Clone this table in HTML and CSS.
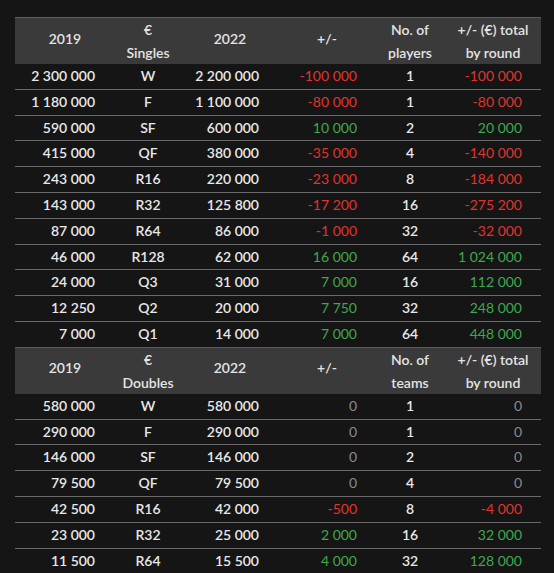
FILE: index.html
```html
<!DOCTYPE html>
<html>
<head>
<meta charset="utf-8">
<link rel="stylesheet" href="styles.css">
</head>
<body>
<table class="prize">
  <colgroup>
    <col class="c1"><col class="c2"><col class="c3"><col class="c4"><col class="c5"><col class="c6">
  </colgroup>
  <tbody>
    <tr class="head">
      <th class="one">2019</th><th>€<br>Singles</th><th class="one">2022</th><th class="one">+/-</th><th>No. of<br>players</th><th>+/- (€) total<br>by round</th>
    </tr>
    <tr><td class="n">2 300 000</td><td class="r">W</td><td class="n">2 200 000</td><td class="d neg">-100 000</td><td class="p">1</td><td class="t neg">-100 000</td></tr>
    <tr><td class="n">1 180 000</td><td class="r">F</td><td class="n">1 100 000</td><td class="d neg">-80 000</td><td class="p">1</td><td class="t neg">-80 000</td></tr>
    <tr><td class="n">590 000</td><td class="r">SF</td><td class="n">600 000</td><td class="d pos">10 000</td><td class="p">2</td><td class="t pos">20 000</td></tr>
    <tr><td class="n">415 000</td><td class="r">QF</td><td class="n">380 000</td><td class="d neg">-35 000</td><td class="p">4</td><td class="t neg">-140 000</td></tr>
    <tr><td class="n">243 000</td><td class="r">R16</td><td class="n">220 000</td><td class="d neg">-23 000</td><td class="p">8</td><td class="t neg">-184 000</td></tr>
    <tr><td class="n">143 000</td><td class="r">R32</td><td class="n">125 800</td><td class="d neg">-17 200</td><td class="p">16</td><td class="t neg">-275 200</td></tr>
    <tr><td class="n">87 000</td><td class="r">R64</td><td class="n">86 000</td><td class="d neg">-1 000</td><td class="p">32</td><td class="t neg">-32 000</td></tr>
    <tr><td class="n">46 000</td><td class="r">R128</td><td class="n">62 000</td><td class="d pos">16 000</td><td class="p">64</td><td class="t pos">1 024 000</td></tr>
    <tr><td class="n">24 000</td><td class="r">Q3</td><td class="n">31 000</td><td class="d pos">7 000</td><td class="p">16</td><td class="t pos">112 000</td></tr>
    <tr><td class="n">12 250</td><td class="r">Q2</td><td class="n">20 000</td><td class="d pos">7 750</td><td class="p">32</td><td class="t pos">248 000</td></tr>
    <tr><td class="n">7 000</td><td class="r">Q1</td><td class="n">14 000</td><td class="d pos">7 000</td><td class="p">64</td><td class="t pos">448 000</td></tr>
    <tr class="head">
      <th class="one">2019</th><th>€<br>Doubles</th><th class="one">2022</th><th class="one">+/-</th><th>No. of<br>teams</th><th>+/- (€) total<br>by round</th>
    </tr>
    <tr><td class="n">580 000</td><td class="r">W</td><td class="n">580 000</td><td class="d zero">0</td><td class="p">1</td><td class="t zero">0</td></tr>
    <tr><td class="n">290 000</td><td class="r">F</td><td class="n">290 000</td><td class="d zero">0</td><td class="p">1</td><td class="t zero">0</td></tr>
    <tr><td class="n">146 000</td><td class="r">SF</td><td class="n">146 000</td><td class="d zero">0</td><td class="p">2</td><td class="t zero">0</td></tr>
    <tr><td class="n">79 500</td><td class="r">QF</td><td class="n">79 500</td><td class="d zero">0</td><td class="p">4</td><td class="t zero">0</td></tr>
    <tr><td class="n">42 500</td><td class="r">R16</td><td class="n">42 000</td><td class="d neg">-500</td><td class="p">8</td><td class="t neg">-4 000</td></tr>
    <tr><td class="n">23 000</td><td class="r">R32</td><td class="n">25 000</td><td class="d pos">2 000</td><td class="p">16</td><td class="t pos">32 000</td></tr>
    <tr><td class="n">11 500</td><td class="r">R64</td><td class="n">15 500</td><td class="d pos">4 000</td><td class="p">32</td><td class="t pos">128 000</td></tr>
  </tbody>
</table>
</body>
</html>
```
FILE: styles.css
```css
html, body {
  margin: 0;
  background: #161515;
}
body {
  padding: 17px 0 0 15px;
  font-family: Lato, "Open Sans", sans-serif;
  font-size: 14px;
  color: #e8e8e8;
}
.prize {
  border-collapse: collapse;
  table-layout: fixed;
  width: 526px;
}
.c1 { width: 100px; }
.c2 { width: 66px; }
.c3 { width: 98px; }
.c4 { width: 96px; }
.c5 { width: 70px; }
.c6 { width: 96px; }
.head th {
  background: #3b3a3a;
  border-top: 1px solid #5c5b5b;
  font-weight: 600;
  color: #e4e4e4;
  line-height: 23px;
  height: 46px;
  padding: 0;
  text-align: center;
  vertical-align: middle;
}
.head th.one {
  padding-bottom: 6px;
  height: 40px;
}
td {
  padding: 0;
  height: 24.8px;
  line-height: 24.8px;
  border-top: 1px solid #6a6a6a;
  white-space: nowrap;
}
.head + tr td { border-top: none; }
td.n { text-align: right; padding-right: 20px; font-weight: 600; }
td.r { text-align: center; font-weight: 600; }
td.p { text-align: center; font-weight: 600; }
td.d { text-align: right; padding-right: 18px; }
td.t { text-align: right; padding-right: 19px; }
.neg { color: #e0332e; }
.pos { color: #3ea84c; }
.zero { color: #8a8a8a; }
```
